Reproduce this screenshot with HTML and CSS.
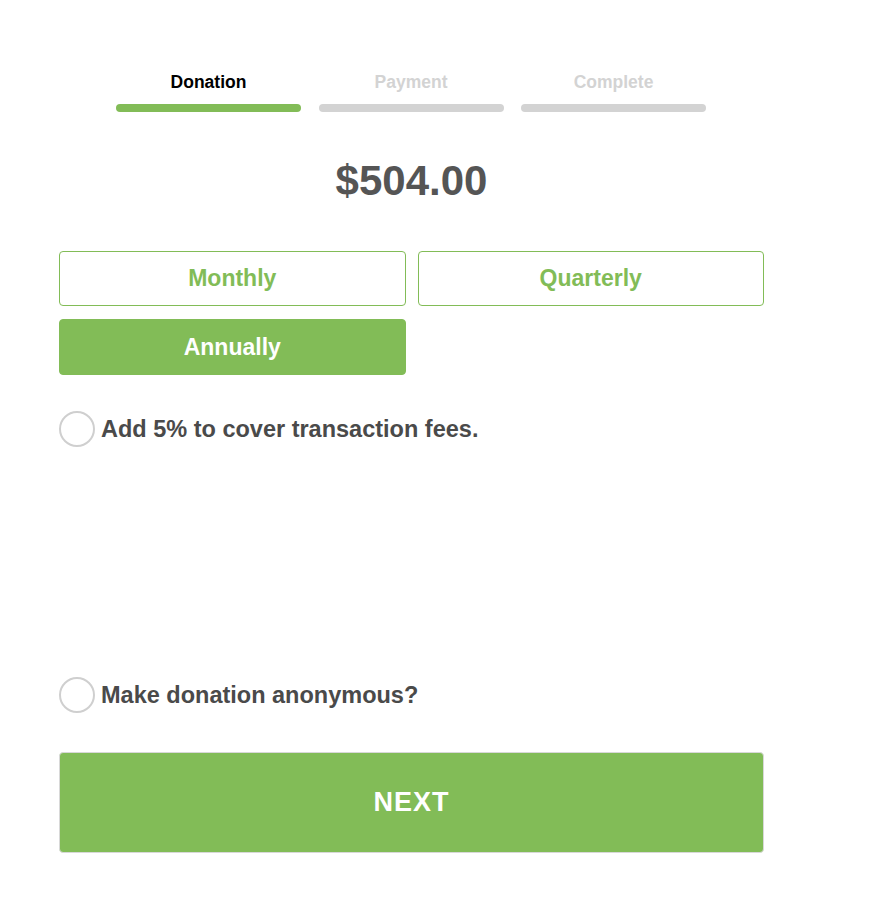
FILE: index.html
```html
<!DOCTYPE html>
<html>
<head>
<meta charset="utf-8">
<link rel="stylesheet" href="styles.css">
</head>
<body>
<div class="page">
  <div class="steps">
    <div class="step active"><span class="step-label">Donation</span><span class="step-bar"></span></div>
    <div class="step"><span class="step-label">Payment</span><span class="step-bar"></span></div>
    <div class="step"><span class="step-label">Complete</span><span class="step-bar"></span></div>
  </div>
  <div class="amount">$504.00</div>
  <div class="freq">
    <button class="freq-btn">Monthly</button>
    <button class="freq-btn">Quarterly</button>
    <button class="freq-btn selected">Annually</button>
  </div>
  <label class="check fees"><span class="circle"></span><span class="check-text">Add 5% to cover transaction fees.</span></label>
  <label class="check anon"><span class="circle"></span><span class="check-text">Make donation anonymous?</span></label>
  <button class="next">NEXT</button>
</div>
</body>
</html>
```
FILE: styles.css
```css
html, body {
  margin: 0;
  padding: 0;
  background: #fff;
}
body {
  font-family: "Liberation Sans", Arial, sans-serif;
}
.page {
  width: 705px;
  margin-left: 59px;
  padding-top: 73px;
}
.steps {
  display: flex;
  gap: 17.5px;
  padding-left: 57px;
}
.step {
  width: 185px;
  display: flex;
  flex-direction: column;
  align-items: center;
}
.step-label {
  font-size: 17.5px;
  font-weight: bold;
  line-height: 19px;
  color: #d3d3d3;
}
.step.active .step-label {
  color: #000;
}
.step-bar {
  display: block;
  margin-top: 12px;
  width: 100%;
  height: 8px;
  border-radius: 4px;
  background: #d3d3d3;
}
.step.active .step-bar {
  background: #82bc57;
}
.amount {
  text-align: center;
  margin-top: 45px;
  font-size: 42px;
  font-weight: bold;
  line-height: 48px;
  color: #555;
}
.freq {
  margin-top: 46px;
  display: grid;
  grid-template-columns: 1fr 1fr;
  column-gap: 12px;
  row-gap: 13px;
}
.freq-btn {
  height: 55px;
  border: 1px solid #82bc57;
  border-radius: 4px;
  background: #fff;
  color: #82bc57;
  font-family: "Liberation Sans", Arial, sans-serif;
  font-size: 23px;
  font-weight: bold;
  padding: 0;
}
.freq-btn.selected {
  background: #82bc57;
  color: #fff;
  height: 56px;
}
.check {
  display: flex;
  align-items: center;
  gap: 6px;
}
.fees {
  margin-top: 36px;
}
.anon {
  margin-top: 230px;
}
.circle {
  width: 32px;
  height: 32px;
  border: 2px solid #cfcfcf;
  border-radius: 50%;
  flex: none;
}
.check-text {
  font-size: 23.5px;
  font-weight: bold;
  color: #4a4a4a;
}
.next {
  margin-top: 39px;
  width: 705px;
  height: 101px;
  border: 1px solid #d8d8d8;
  border-radius: 4px;
  background: #82bc57;
  color: #fff;
  font-family: "Liberation Sans", Arial, sans-serif;
  font-size: 27px;
  font-weight: bold;
  letter-spacing: 1px;
  padding: 0;
}
```
